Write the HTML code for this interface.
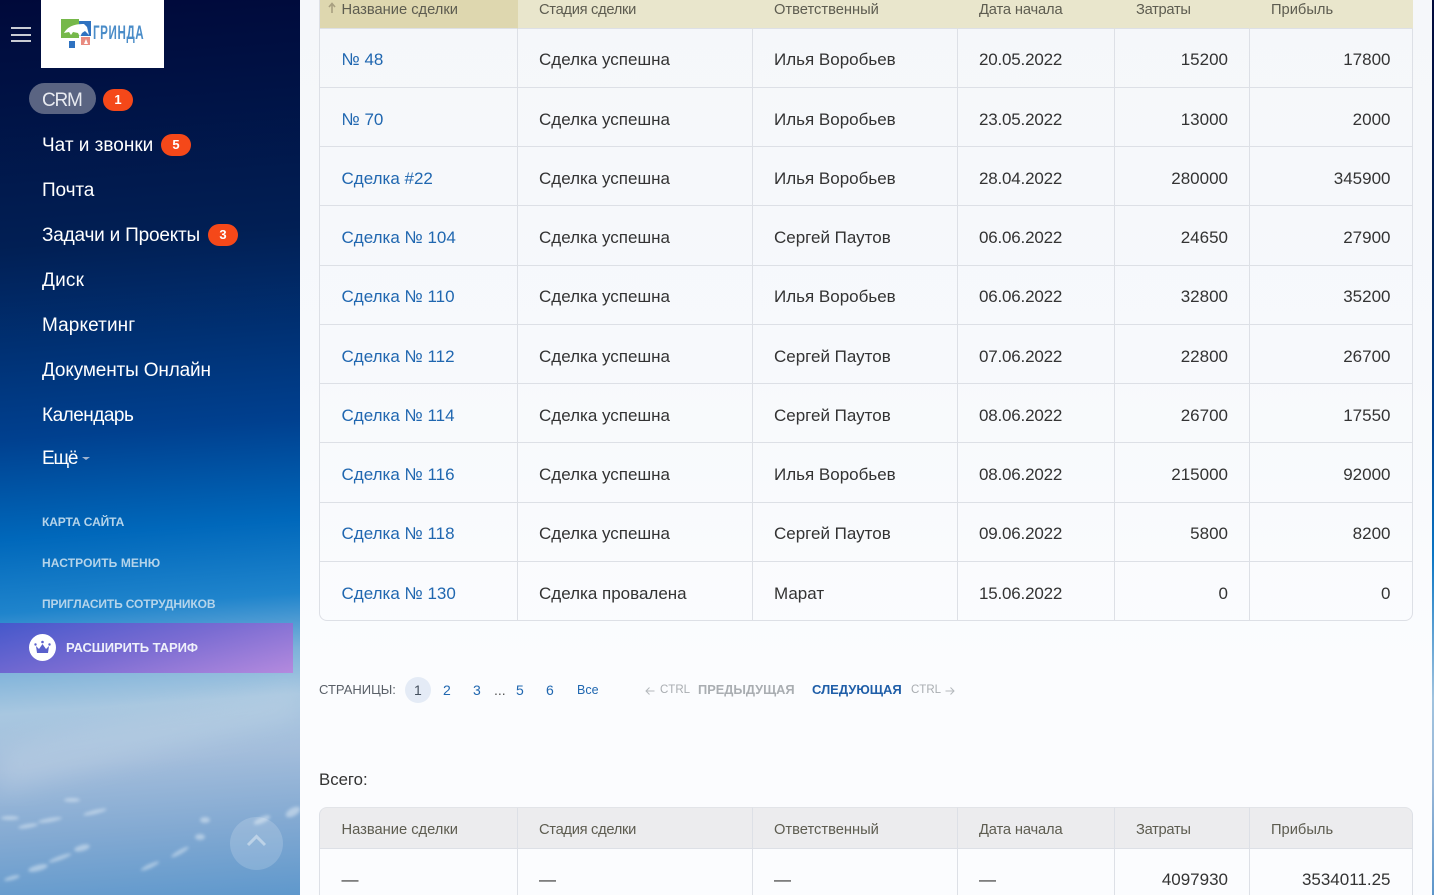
<!DOCTYPE html>
<html lang="ru"><head><meta charset="utf-8"><title>CRM</title>
<style>
html,body{margin:0;padding:0;width:1434px;height:895px;overflow:hidden}
body{position:relative;font-family:"Liberation Sans","DejaVu Sans",sans-serif;background:linear-gradient(180deg,#00093a 0,#012257 28%,#00408f 48%,#0a76c5 62%,#a0c3df 78%,#9bb8d8 87%,#5b95ca 100%)}
.abs{position:absolute;white-space:nowrap}
.sky{position:absolute;left:0;top:0;width:300px;height:895px;background:linear-gradient(176deg,#00093a 0,#011f54 27%,#00408f 48%,#0068bb 59%,#1f84cc 67%,#7db2da 73%,#a8c7e0 78%,#a3bddb 84%,#82a9d2 92%,#5f98cc 100%)}
.panel{position:absolute;left:300px;top:0;width:1132px;height:895px;background:linear-gradient(180deg,#f5f7fa 0,#f7f9fc 40%,#fbfcfe 75%,#fbfcfe 100%)}
.m{position:absolute;left:42px;font-size:19px;color:#fff;line-height:24px;white-space:nowrap}
.b{position:absolute;height:22px;width:30px;border-radius:11px;background:#f54819;color:#fff;font-size:13px;font-weight:bold;text-align:center;line-height:22px}
.s{position:absolute;left:42px;font-size:12px;font-weight:bold;color:#b5d4ea;line-height:16px;white-space:nowrap}
table{position:absolute;left:319px;width:1094px;border-collapse:separate;border-spacing:0;table-layout:fixed;font-size:17px;color:#333}
td,th{padding:3px 21px 0;box-sizing:border-box;border-right:1px solid #dde0e6;border-bottom:1px solid #dde0e6;font-weight:normal;text-align:left;white-space:nowrap;overflow:visible}
tr.u td{padding-top:5px}
tr td:first-child,tr th:first-child{border-left:1px solid #dde0e6;padding-left:21.5px}
tr td:last-child,tr th:last-child{padding-right:21.5px}
th{font-size:14.7px;color:#5d5c50;padding-top:4px}
th span{letter-spacing:-.3px}
td.n{text-align:right}
td.d{letter-spacing:-.2px}
a{color:#2067b0;text-decoration:none}
.h1 th{background:#e9e6cc;border-right-color:#e9e6cc;border-bottom-color:#dde0e6}
.h1 th.on{background:#ded7af;border-right-color:#ded7af}
.h2 th{background:#ececee}
.t2 tr:first-child th:first-child{border-top-left-radius:8px}
.t2 tr:first-child th:last-child{border-top-right-radius:8px}
.t2 th{border-top:1px solid #e2e4e8}
.p{position:absolute;top:682px;font-size:14px;line-height:16px;color:#2067b0;white-space:nowrap}
.g{color:#a9adb1}
</style></head><body>

<div class="sky"></div>
<svg class="abs" style="left:0;top:640px" width="300" height="255" viewBox="0 0 300 255">
<defs><filter id="bl"><feGaussianBlur stdDeviation="1.5"/></filter><filter id="bl2"><feGaussianBlur stdDeviation="12"/></filter></defs>
<path d="M0 110 C80 80 200 70 300 45 L300 80 C200 105 90 125 0 155Z" fill="#c4d6e6" opacity=".35" filter="url(#bl2)"/>
<g fill="#e4eef6" opacity=".5" filter="url(#bl)">
<ellipse cx="10" cy="178" rx="9" ry="2"/>
<ellipse cx="28" cy="186" rx="10" ry="2" transform="rotate(-10 28 186)"/>
<ellipse cx="50" cy="180" rx="12" ry="2" transform="rotate(-10 50 180)"/>
<ellipse cx="72" cy="160" rx="8" ry="2"/>
<ellipse cx="95" cy="172" rx="12" ry="2" transform="rotate(-14 95 172)"/>
<ellipse cx="82" cy="208" rx="8" ry="3" transform="rotate(-15 82 208)"/>
<ellipse cx="60" cy="218" rx="12" ry="2" transform="rotate(-20 60 218)"/>
<ellipse cx="38" cy="228" rx="10" ry="3" transform="rotate(-15 38 228)"/>
<ellipse cx="12" cy="238" rx="8" ry="2" transform="rotate(-15 12 238)"/>
<ellipse cx="180" cy="212" rx="10" ry="2" transform="rotate(-30 180 212)"/>
<ellipse cx="200" cy="197" rx="5" ry="3"/>
<ellipse cx="205" cy="180" rx="5" ry="3"/>
<ellipse cx="293" cy="172" rx="8" ry="4" transform="rotate(-30 293 172)"/>
<ellipse cx="150" cy="226" rx="10" ry="2" transform="rotate(-25 150 226)"/>
<ellipse cx="262" cy="180" rx="9" ry="3" transform="rotate(-25 262 180)"/>
</g></svg>

<!-- hamburger -->
<div class="abs" style="left:11px;top:27px;width:20px;height:2px;background:#c9ccd4"></div>
<div class="abs" style="left:11px;top:34px;width:20px;height:2px;background:#c9ccd4"></div>
<div class="abs" style="left:11px;top:40px;width:20px;height:2px;background:#c9ccd4"></div>

<!-- logo -->
<div class="abs" style="left:41px;top:0;width:123px;height:68px;background:#fff"></div>
<svg class="abs" style="left:41px;top:0" width="123" height="68" viewBox="0 0 123 68">
<rect x="37" y="21" width="13" height="15" fill="#2f72c0"/>
<rect x="20" y="19" width="18" height="19" fill="#76b84a"/>
<path d="M23 33 C27 26 34 24 43 24 L46 27 L48 35 L44 31 L41 33 L39 37 L37 33 L32 32 L30 35 L28 32Z" fill="#fff"/>
<rect x="40" y="37" width="9" height="8" fill="#e98b80"/>
<path d="M43 44 L45 39 L47 44Z" fill="#fff"/>
<rect x="28" y="41" width="6" height="7" fill="#2f72c0"/>
</svg>
<div class="abs" style="left:93px;top:24px;font-size:19px;color:#4a8cc8;font-weight:bold;letter-spacing:1px;transform:scaleX(.61);transform-origin:0 0;line-height:20px">ГРИНДА</div>

<!-- menu -->
<div class="abs" style="left:29px;top:83px;width:67px;height:31px;border-radius:16px;background:#5a6482"></div>
<div class="m" style="top:89px;color:#e8eaf0;letter-spacing:-1.2px">CRM</div><div class="b" style="left:103px;top:89px">1</div>
<div class="m" style="top:134px">Чат и звонки</div><div class="b" style="left:161px;top:134px">5</div>
<div class="m" style="top:179px;letter-spacing:-.1px">Почта</div>
<div class="m" style="top:224px;letter-spacing:-.2px">Задачи и Проекты</div><div class="b" style="left:208px;top:224px">3</div>
<div class="m" style="top:269px;letter-spacing:.2px">Диск</div>
<div class="m" style="top:314px;letter-spacing:.1px">Маркетинг</div>
<div class="m" style="top:359px;letter-spacing:-.15px">Документы Онлайн</div>
<div class="m" style="top:404px;letter-spacing:-.5px">Календарь</div>
<div class="m" style="top:447px;letter-spacing:-1.2px">Ещё</div>
<div class="abs" style="left:82px;top:457px;border:4px solid transparent;border-top:3px solid #9fb4d0;border-bottom:0"></div>
<div class="s" style="top:514px;letter-spacing:-.1px">КАРТА САЙТА</div>
<div class="s" style="top:555px;letter-spacing:.1px">НАСТРОИТЬ МЕНЮ</div>
<div class="s" style="top:596px;letter-spacing:-.12px">ПРИГЛАСИТЬ СОТРУДНИКОВ</div>

<div class="abs" style="left:0;top:623px;width:293px;height:50px;background:linear-gradient(165deg,#4558cb 0,#7a6cd2 50%,#b48ade 100%)"></div>
<div class="abs" style="left:29px;top:634px;width:27px;height:27px;border-radius:50%;background:#fff"></div>
<svg class="abs" style="left:29px;top:634px" width="27" height="27" viewBox="0 0 27 27"><path d="M7 12 L10 15 L13.5 10 L17 15 L20 12 L19 19 H8Z" fill="#5a60cc"/><circle cx="13.5" cy="8" r="1.3" fill="#5a60cc"/><circle cx="6.5" cy="10.5" r="1.2" fill="#5a60cc"/><circle cx="20.5" cy="10.5" r="1.2" fill="#5a60cc"/></svg>
<div class="s" style="left:66px;top:640px;color:#eef0fb;font-size:13px;letter-spacing:-.07px">РАСШИРИТЬ ТАРИФ</div>

<div class="abs" style="left:230px;top:817px;width:53px;height:53px;border-radius:50%;background:rgba(255,255,255,.17)"></div>
<svg class="abs" style="left:230px;top:817px" width="53" height="53" viewBox="0 0 53 53"><path d="M18 28 L26.5 19.5 L35 28" fill="none" stroke="#fff" stroke-opacity=".4" stroke-width="3"/></svg>

<!-- content -->
<div class="panel"></div>

<table style="top:-12px">
<colgroup><col style="width:199px"><col style="width:235px"><col style="width:205px"><col style="width:157px"><col style="width:135px"><col style="width:163px"></colgroup>
<tr class="h1" style="height:41px"><th class="on">Название сделки</th><th><span>Стадия сделки</span></th><th>Ответственный</th><th style="letter-spacing:-.15px">Дата начала</th><th><span>Затраты</span></th><th>Прибыль</th></tr>
<tr style="height:59px"><td><a>№ 48</a></td><td>Сделка успешна</td><td>Илья Воробьев</td><td class="d">20.05.2022</td><td class="n">15200</td><td class="n">17800</td></tr>
<tr class="u" style="height:59px"><td><a>№ 70</a></td><td>Сделка успешна</td><td>Илья Воробьев</td><td class="d">23.05.2022</td><td class="n">13000</td><td class="n">2000</td></tr>
<tr class="u" style="height:59px"><td><a>Сделка #22</a></td><td>Сделка успешна</td><td>Илья Воробьев</td><td class="d">28.04.2022</td><td class="n">280000</td><td class="n">345900</td></tr>
<tr class="u" style="height:60px"><td><a>Сделка № 104</a></td><td>Сделка успешна</td><td>Сергей Паутов</td><td class="d">06.06.2022</td><td class="n">24650</td><td class="n">27900</td></tr>
<tr style="height:59px"><td><a>Сделка № 110</a></td><td>Сделка успешна</td><td>Илья Воробьев</td><td class="d">06.06.2022</td><td class="n">32800</td><td class="n">35200</td></tr>
<tr class="u" style="height:59px"><td><a>Сделка № 112</a></td><td>Сделка успешна</td><td>Сергей Паутов</td><td class="d">07.06.2022</td><td class="n">22800</td><td class="n">26700</td></tr>
<tr class="u" style="height:59px"><td><a>Сделка № 114</a></td><td>Сделка успешна</td><td>Сергей Паутов</td><td class="d">08.06.2022</td><td class="n">26700</td><td class="n">17550</td></tr>
<tr class="u" style="height:60px"><td><a>Сделка № 116</a></td><td>Сделка успешна</td><td>Илья Воробьев</td><td class="d">08.06.2022</td><td class="n">215000</td><td class="n">92000</td></tr>
<tr style="height:59px"><td><a>Сделка № 118</a></td><td>Сделка успешна</td><td>Сергей Паутов</td><td class="d">09.06.2022</td><td class="n">5800</td><td class="n">8200</td></tr>
<tr class="u" style="height:59px"><td style="border-bottom-left-radius:8px"><a>Сделка № 130</a></td><td>Сделка провалена</td><td>Марат</td><td class="d">15.06.2022</td><td class="n">0</td><td class="n" style="border-bottom-right-radius:8px">0</td></tr>
</table>
<svg class="abs" style="left:328px;top:2px" width="8" height="12" viewBox="0 0 8 12"><path d="M4 11 V2 M1 5 L4 1.5 L7 5" fill="none" stroke="#a89f80" stroke-width="1.6"/></svg>

<!-- pagination -->
<div class="p" style="left:319px;color:#5a6068;font-size:13px">СТРАНИЦЫ:</div>
<div class="abs" style="left:405px;top:677px;width:26px;height:26px;border-radius:50%;background:#e4ebf6"></div>
<div class="p" style="left:414px;color:#44505e">1</div>
<div class="p" style="left:443px">2</div>
<div class="p" style="left:473px">3</div>
<div class="p" style="left:494px;color:#555">...</div>
<div class="p" style="left:516px">5</div>
<div class="p" style="left:546px">6</div>
<div class="p" style="left:577px;font-size:12.5px">Все</div>
<svg class="abs" style="left:645px;top:686px" width="10" height="10" viewBox="0 0 10 10"><path d="M9.5 5 H1 M4.5 1.5 L1 5 L4.5 8.5" fill="none" stroke="#b4b8bc" stroke-width="1"/></svg>
<div class="p g" style="left:660px;font-size:11.5px">CTRL</div>
<div class="p g" style="left:698px;font-weight:bold;font-size:12.8px">ПРЕДЫДУЩАЯ</div>
<div class="p" style="left:812px;font-weight:bold;font-size:13px;color:#1f5ea8">СЛЕДУЮЩАЯ</div>
<div class="p g" style="left:911px;font-size:11.5px">CTRL</div>
<svg class="abs" style="left:945px;top:686px" width="10" height="10" viewBox="0 0 10 10"><path d="M0.5 5 H9 M5.5 1.5 L9 5 L5.5 8.5" fill="none" stroke="#b4b8bc" stroke-width="1"/></svg>

<div class="abs" style="left:319px;top:770px;font-size:16.8px;line-height:20px;color:#333">Всего:</div>

<table class="t2" style="top:807px">
<colgroup><col style="width:199px"><col style="width:235px"><col style="width:205px"><col style="width:157px"><col style="width:135px"><col style="width:163px"></colgroup>
<tr class="h2" style="height:42px"><th>Название сделки</th><th><span>Стадия сделки</span></th><th>Ответственный</th><th style="letter-spacing:-.15px">Дата начала</th><th><span>Затраты</span></th><th>Прибыль</th></tr>
<tr style="height:60px"><td>—</td><td>—</td><td>—</td><td>—</td><td class="n">4097930</td><td class="n">3534011.25</td></tr>
</table>

</body></html>
